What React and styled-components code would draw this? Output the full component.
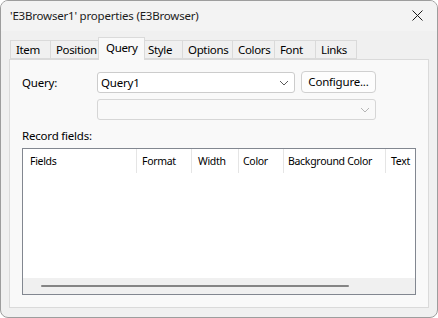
import styled, { createGlobalStyle } from "styled-components";

const GlobalStyle = createGlobalStyle`
  html, body {
    margin: 0;
    padding: 0;
    background: #ffffff;
  }
  * {
    box-sizing: border-box;
  }
`;

const tabs = [
  { label: "Item", width: 40 },
  { label: "Position", width: 49 },
  { label: "Query", width: 44, active: true },
  { label: "Style", width: 40 },
  { label: "Options", width: 50 },
  { label: "Colors", width: 42 },
  { label: "Font", width: 41 },
  { label: "Links", width: 41 },
];

const columns = [
  { label: "Fields", width: 114, pad: 7 },
  { label: "Format", width: 55, pad: 5 },
  { label: "Width", width: 47, pad: 6 },
  { label: "Color", width: 45, pad: 4 },
  { label: "Background Color", width: 102, pad: 4 },
  { label: "Text", width: 60, pad: 5 },
];

const Window = styled.div`
  width: 438px;
  height: 318px;
  border: 1px solid #9d9d9d;
  border-radius: 8px;
  background: #f0f0f0;
  display: flex;
  flex-direction: column;
  overflow: hidden;
  font-family: "Segoe UI", "Noto Sans", sans-serif;
  font-size: 11.5px;
  letter-spacing: -0.2px;
  color: #000;
`;

const TitleBar = styled.div`
  height: 30px;
  flex: none;
  background: #f3f3f3;
  display: flex;
  align-items: center;
  justify-content: space-between;
  padding: 0 10px 2px 9px;
`;

const Title = styled.div`
  color: #1b1b1b;
`;

const CloseBox = styled.div`
  width: 12px;
  height: 12px;
  display: flex;
  align-items: center;
  justify-content: center;
  margin-right: 4px;
`;

const Body = styled.div`
  flex: 1;
  display: flex;
  flex-direction: column;
  padding: 6px 8px 9px 8px;
`;

const TabStrip = styled.div`
  height: 22px;
  flex: none;
  display: flex;
  align-items: flex-end;
  padding-left: 1px;
  position: relative;
  z-index: 1;
`;

const Tab = styled.div`
  flex: none;
  height: ${(p) => (p.$active ? "23px" : "19px")};
  width: ${(p) => (p.$active ? p.$width + 3 : p.$width + 1)}px;
  margin-left: ${(p) => (p.$active ? "-2px" : "-1px")};
  margin-right: ${(p) => (p.$active ? "-2px" : "0")};
  margin-bottom: ${(p) => (p.$active ? "-1px" : "0")};
  padding-left: ${(p) => (p.$active ? "7px" : "5px")};
  padding-top: ${(p) => (p.$active ? "2px" : "1px")};
  background: ${(p) => (p.$active ? "#f9f9f9" : "#f0f0f0")};
  border: 1px solid #dadada;
  border-bottom: ${(p) => (p.$active ? "none" : "1px solid #dadada")};
  position: relative;
  z-index: ${(p) => (p.$active ? 2 : 1)};
  white-space: nowrap;
  letter-spacing: -0.35px;
  line-height: 16px;
  &:first-child {
    margin-left: 0;
  }
`;

const Panel = styled.div`
  flex: 1;
  background: #f9f9f9;
  border: 1px solid #dadada;
  padding: 12px 12px 0 12px;
  display: flex;
  flex-direction: column;
`;

const QueryGrid = styled.div`
  display: grid;
  grid-template-columns: 75px auto;
  row-gap: 6px;
`;

const Label = styled.div`
  line-height: 16px;
  padding-top: 3px;
`;

const Row = styled.div`
  display: flex;
  align-items: center;
  gap: 6px;
`;

const Combo = styled.div`
  width: ${(p) => p.$width}px;
  height: 21px;
  background: ${(p) => (p.$disabled ? "#f9f9f9" : "#ffffff")};
  border: 1px solid ${(p) => (p.$disabled ? "#d6d6d6" : "#cccccc")};
  border-radius: 3px;
  display: flex;
  align-items: center;
  justify-content: space-between;
  padding: 0 5px 0 3px;
`;

const ComboText = styled.span`
  line-height: 16px;
`;

const Button = styled.div`
  width: 75px;
  height: 22px;
  background: #fdfdfd;
  border: 1px solid #d0d0d0;
  border-radius: 4px;
  display: flex;
  align-items: center;
  justify-content: center;
  line-height: 16px;
  margin-top: -1px;
`;

const SectionLabel = styled.div`
  margin-top: 8px;
  line-height: 16px;
  height: 20px;
`;

const List = styled.div`
  width: 394px;
  height: 147px;
  border: 1px solid #828790;
  background: #ffffff;
  display: flex;
  flex-direction: column;
  overflow: hidden;
`;

const Header = styled.div`
  height: 24px;
  display: flex;
  flex: none;
`;

const HeaderCell = styled.div`
  flex: none;
  width: ${(p) => p.$width}px;
  padding-left: ${(p) => p.$pad}px;
  border-right: 1px solid #e5e5e5;
  font-family: "Tahoma", "Noto Sans", sans-serif;
  font-size: 10.5px;
  letter-spacing: -0.3px;
  line-height: 24px;
  white-space: nowrap;
  overflow: hidden;
`;

const ListBody = styled.div`
  flex: 1;
`;

const HScroll = styled.div`
  height: 16px;
  flex: none;
  background: #f0f0f0;
  display: flex;
  align-items: center;
  padding-left: 18px;
`;

const Thumb = styled.div`
  width: 308px;
  height: 2px;
  border-radius: 1px;
  background: #858585;
`;

const Chevron = ({ color }) => (
  <svg width="10" height="6" viewBox="0 0 10 6">
    <path d="M1 1 L5 5 L9 1" fill="none" stroke={color} strokeWidth="1" />
  </svg>
);

export default function App() {
  return (
    <>
      <GlobalStyle />
      <Window>
        <TitleBar>
          <Title>'E3Browser1' properties (E3Browser)</Title>
          <CloseBox>
            <svg width="11" height="11" viewBox="0 0 11 11">
              <path d="M0.5 0.5 L10.5 10.5 M10.5 0.5 L0.5 10.5" stroke="#1a1a1a" strokeWidth="1" />
            </svg>
          </CloseBox>
        </TitleBar>
        <Body>
          <TabStrip>
            {tabs.map((t) => (
              <Tab key={t.label} $width={t.width} $active={t.active}>
                {t.label}
              </Tab>
            ))}
          </TabStrip>
          <Panel>
            <QueryGrid>
              <Label>Query:</Label>
              <Row>
                <Combo $width={198}>
                  <ComboText>Query1</ComboText>
                  <Chevron color="#5a5a5a" />
                </Combo>
                <Button>Configure...</Button>
              </Row>
              <div />
              <Combo $width={279} $disabled>
                <span />
                <Chevron color="#b5b5b5" />
              </Combo>
            </QueryGrid>
            <SectionLabel>Record fields:</SectionLabel>
            <List>
              <Header>
                {columns.map((c) => (
                  <HeaderCell key={c.label} $width={c.width} $pad={c.pad}>
                    {c.label}
                  </HeaderCell>
                ))}
              </Header>
              <ListBody />
              <HScroll>
                <Thumb />
              </HScroll>
            </List>
          </Panel>
        </Body>
      </Window>
    </>
  );
}
